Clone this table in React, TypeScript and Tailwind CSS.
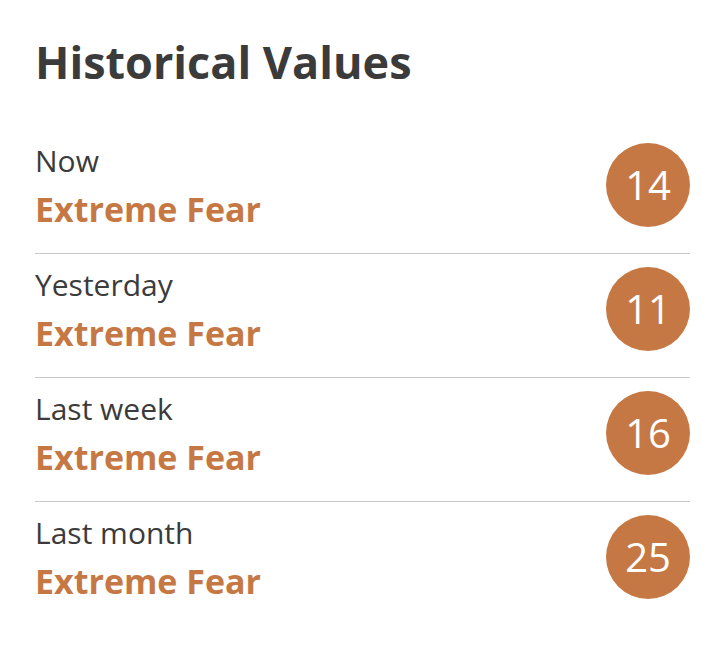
const rows = [
  { label: "Now", status: "Extreme Fear", value: 14 },
  { label: "Yesterday", status: "Extreme Fear", value: 11 },
  { label: "Last week", status: "Extreme Fear", value: 16 },
  { label: "Last month", status: "Extreme Fear", value: 25 },
];

const HistoricalValues = () => {
  return (
    <div className="min-h-screen w-full bg-white px-[35px] pt-[34px] font-['Open_Sans',sans-serif] text-[#3b3b3b]">
      <h2 className="text-[45px] font-bold leading-[56px]">Historical Values</h2>

      <div className="mt-[40px] w-[655px]">
        {rows.map((row, i) => (
          <div
            key={row.label}
            className={
              i < rows.length - 1
                ? "flex items-center justify-between border-b border-[#c9c9c9] pt-[9px] pb-[22px]"
                : "flex items-center justify-between pt-[9px] pb-[22px]"
            }
          >
            <div className="flex flex-col">
              <span className="text-[30px] leading-[44px]">{row.label}</span>
              <span className="mt-[4px] text-[34px] font-bold leading-[44px] text-[#c67844]">
                {row.status}
              </span>
            </div>
            <div className="flex h-[84px] w-[84px] items-center justify-center rounded-full bg-[#c67844] text-[40px] leading-none text-white">
              {row.value}
            </div>
          </div>
        ))}
      </div>
    </div>
  );
};

export default function App() {
  return <HistoricalValues />;
}
